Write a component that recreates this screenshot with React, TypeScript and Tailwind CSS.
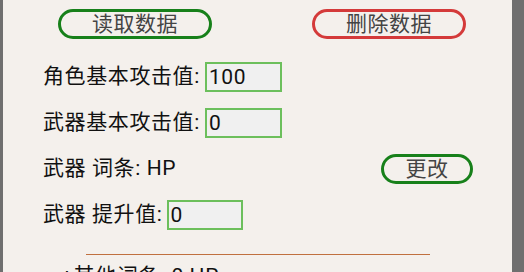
import React from "react";

const font = { fontFamily: 'Roboto, "Noto Sans CJK SC", sans-serif' };

function PillButton({ label, color, className }: { label: string; color: "green" | "red"; className?: string }) {
  const border = color === "green" ? "border-[#17801a]" : "border-[#d43a3a]";
  return (
    <button
      className={`shrink-0 h-[30px] rounded-full border-[3px] ${border} bg-transparent text-[21px] leading-none text-[#444] tracking-[0.5px] flex items-center justify-center ${className ?? ""}`}
    >
      {label}
    </button>
  );
}

function NumberField({ value, width }: { value: string; width: string }) {
  return (
    <div className={`h-[30px] ${width} border-[2px] border-[#6cbf5c] bg-[#f0f0f0] flex items-center pl-[2px] text-[21px] leading-none text-[#111]`}>
      {value}
    </div>
  );
}

export default function App() {
  return (
    <div className="flex w-[524px] h-[272px] overflow-hidden bg-[#f4f0ec]" style={font}>
      <div className="w-[3px] shrink-0 bg-[#6f6f6f]" />
      <div className="flex-1 flex flex-col pt-[9px]">
        {/* Top buttons */}
        <div className="flex items-center shrink-0">
          <PillButton label="读取数据" color="green" className="ml-[55px] w-[154px]" />
          <PillButton label="删除数据" color="red" className="ml-[100px] w-[154px]" />
        </div>

        <div className="flex flex-col shrink-0 gap-[16px] mt-[23px] pl-[40px] text-[21px] tracking-[0.6px] text-[#111]">
          <div className="flex items-center h-[30px]">
            <span>角色基本攻击值:</span>
            <div className="ml-[5px]">
              <NumberField value="100" width="w-[77px]" />
            </div>
          </div>

          <div className="flex items-center h-[30px]">
            <span>武器基本攻击值:</span>
            <div className="ml-[5px]">
              <NumberField value="0" width="w-[77px]" />
            </div>
          </div>

          <div className="flex items-center justify-between h-[30px] pr-[39px]">
            <span>武器 词条: HP</span>
            <PillButton label="更改" color="green" className="w-[92px]" />
          </div>

          <div className="flex items-center h-[30px]">
            <span>武器 提升值:</span>
            <div className="ml-[4px]">
              <NumberField value="0" width="w-[76px]" />
            </div>
          </div>
        </div>

        <div className="shrink-0 ml-[83px] mt-[24px] w-[344px] h-px bg-[#c0703f]" />

        <div className="shrink-0 ml-[58px] mt-[11px] text-[21px] leading-none tracking-[0.6px] text-[#111]">+其他词条: 0 HP</div>
      </div>
      <div className="w-[12px] shrink-0 bg-[#6f6f6f]" />
    </div>
  );
}
